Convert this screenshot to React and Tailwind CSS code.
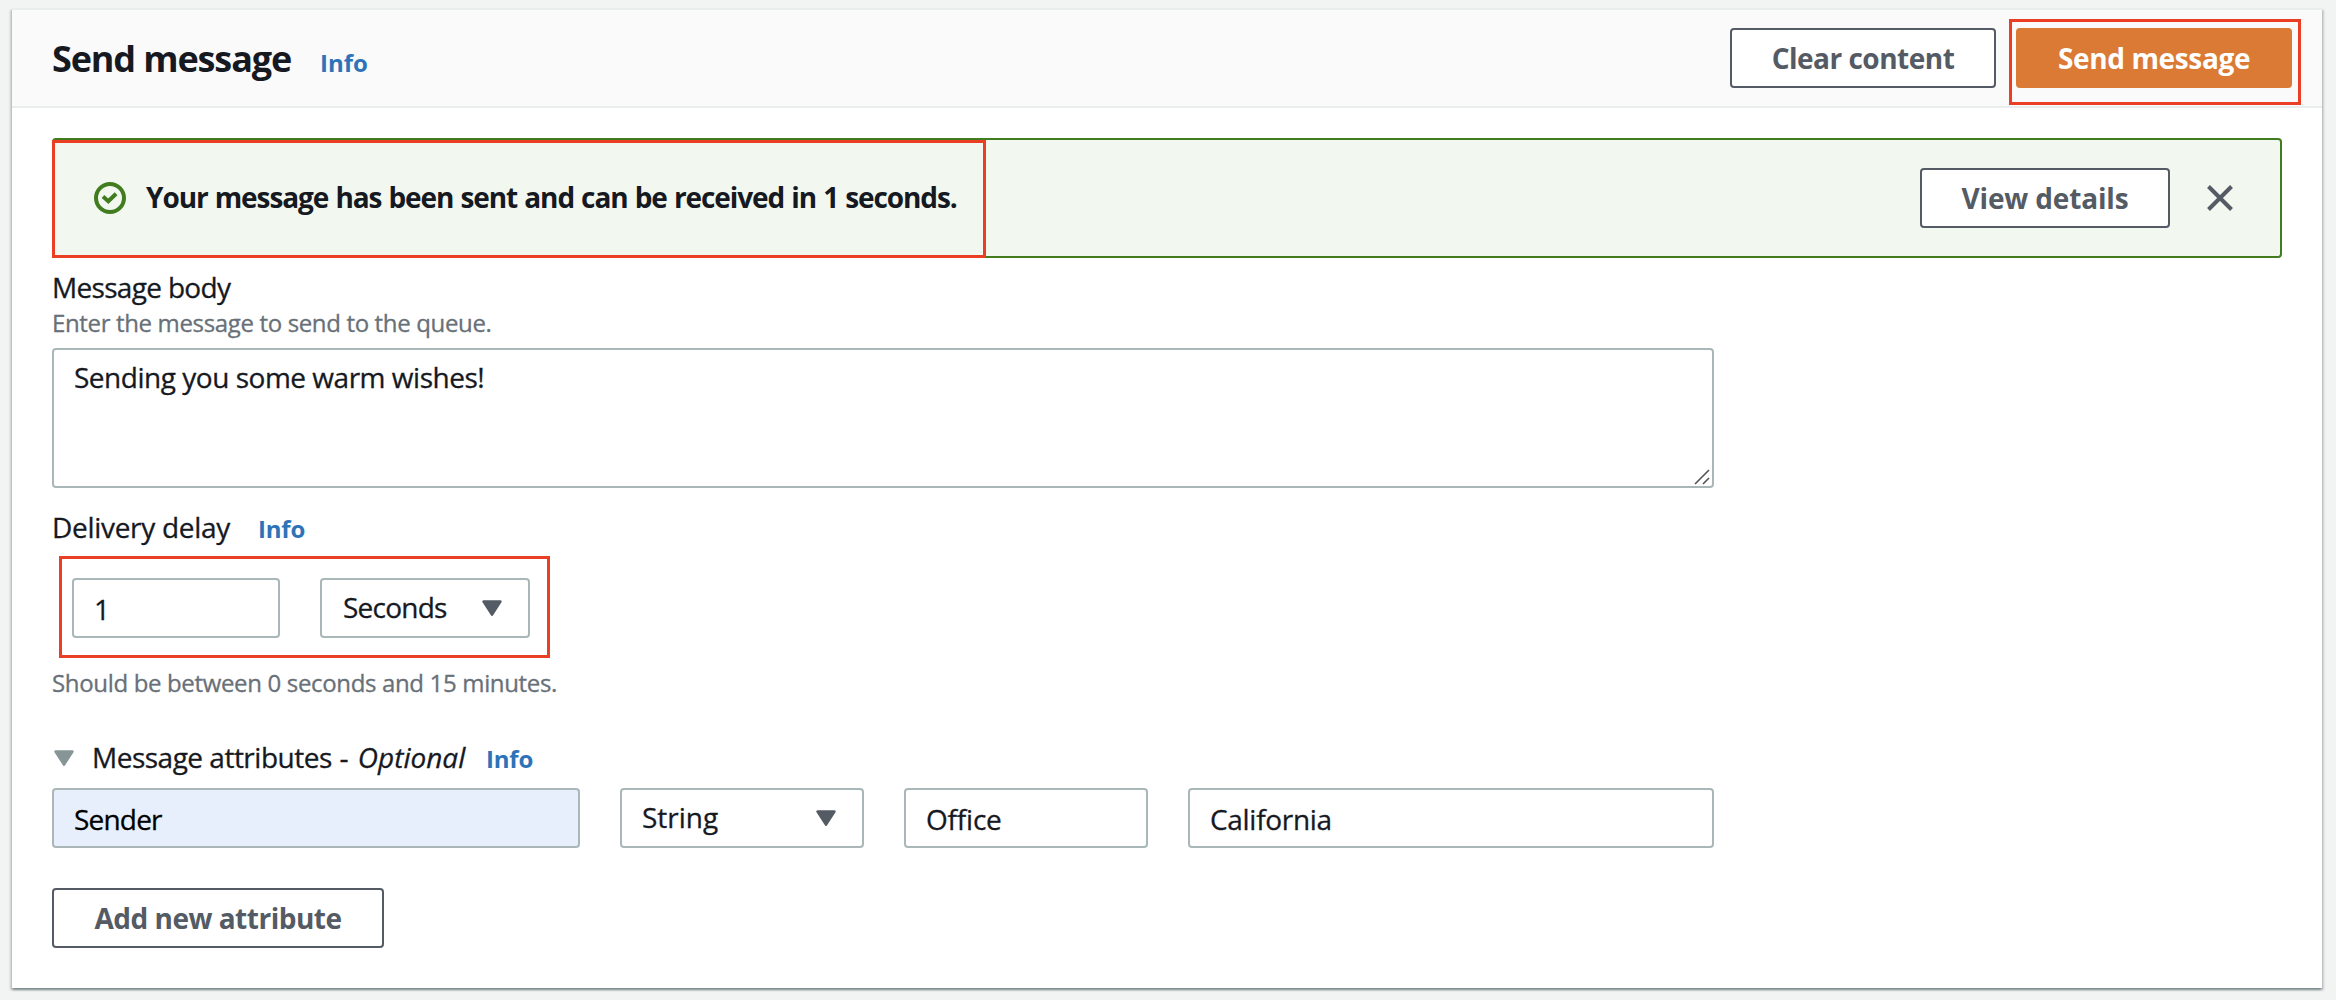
function InfoLink({ className = "" }) {
  return (
    <a href="#" className={`text-2xl leading-10 font-bold text-[#2e73b8] ${className}`}>
      Info
    </a>
  );
}

function Button({ children, className = "" }) {
  return (
    <button
      type="button"
      className={`flex h-[60px] items-center justify-center rounded-[4px] border-2 border-[#545b64] bg-white font-bold whitespace-nowrap text-[#545b64] ${className}`}
    >
      {children}
    </button>
  );
}

function Caret({ className = "" }) {
  return (
    <svg viewBox="0 0 20 16" className={`h-4 w-5 shrink-0 ${className}`} aria-hidden="true">
      <path d="M1.6 1.5h16.8L10 14.6z" fill="currentColor" stroke="currentColor" strokeWidth="2.6" strokeLinejoin="round" />
    </svg>
  );
}

function Field({ children, className = "" }) {
  return (
    <div className={`flex h-[60px] items-center rounded-[4px] border-2 border-[#aab7b8] pt-0.5 pl-5 ${className}`}>
      {children}
    </div>
  );
}

function Select({ children, className = "" }) {
  return (
    <div className={`flex h-[60px] items-center justify-between rounded-[4px] border-2 border-[#aab7b8] bg-white ${className}`}>
      <span className="pb-0.5">{children}</span>
      <Caret className="text-[#545b64]" />
    </div>
  );
}

export default function App() {
  return (
    <div className="h-[1000px] w-[2336px] bg-[#f2f3f3] pt-2 pr-3.5 pl-3 font-['Open_Sans','Noto_Sans',sans-serif] text-[28px] leading-10 text-[#16191f]">
      <main className="h-[980px] border-t-2 border-[#eaeded] bg-white shadow-[0_2px_2px_0_rgba(0,28,36,0.3),2px_2px_2px_0_rgba(0,28,36,0.15),-2px_2px_2px_0_rgba(0,28,36,0.15)]">
        <header className="flex h-[98px] items-start justify-between border-b-2 border-[#eaeded] bg-[#fafafa] pr-[21px] pl-10">
          <div className="flex items-baseline pt-[29px]">
            <h1 className="w-[268px] text-4xl leading-10 font-bold tracking-[-1.13px] whitespace-nowrap">Send message</h1>
            <InfoLink />
          </div>
          <div className="flex pt-[9px]">
            <Button className="mt-[9px] mr-[13px] w-[266px] tracking-[-0.5px]">Clear content</Button>
            <div className="h-[86px] w-[292px] border-3 border-[#eb3f25] pt-1.5 pl-1">
              <button
                type="button"
                className="flex h-[60px] w-[276px] items-center justify-center rounded-[4px] bg-[#db7a34] font-bold tracking-[-0.36px] text-white"
              >
                Send message
              </button>
            </div>
          </div>
        </header>

        <div className="px-10 pt-[30px]">
          <section className="relative flex h-[120px] items-center rounded-[4px] border-2 border-[#417d1f] bg-[#f2f8f0] pr-[47px] pl-10">
            <svg viewBox="0 0 32 32" className="h-8 w-8 text-[#417d1f]" fill="none" stroke="currentColor" strokeWidth="4" aria-hidden="true">
              <circle cx="16" cy="16" r="14" />
              <path d="M9 14.6l5.3 4.6 7.8-7.4" />
            </svg>
            <p className="ml-5 pb-0.5 font-bold tracking-[-1.08px] [word-spacing:0.9px] whitespace-nowrap">
              Your message has been sent and can be received in 1 seconds.
            </p>
            <Button className="ml-auto w-[250px] tracking-[-0.16px]">View details</Button>
            <svg viewBox="0 0 26 26" className="ml-[37px] h-[26px] w-[26px] text-[#545b64]" fill="none" stroke="currentColor" strokeWidth="4" aria-hidden="true">
              <path d="M1.5 1.5l23 23M24.5 1.5l-23 23" />
            </svg>
            <div className="pointer-events-none absolute top-0 -left-0.5 h-[118px] w-[934px] border-3 border-[#eb3f25]" />
          </section>

          <h2 className="mt-[9px] tracking-[-0.68px] [-webkit-text-stroke:0.3px]">Message body</h2>
          <p className="text-2xl leading-8 tracking-[-0.35px] text-[#687078] [-webkit-text-stroke:0.3px]">
            Enter the message to send to the queue.
          </p>
          <div className="mt-[9px] flex h-[140px] w-[1662px] items-start justify-between rounded-[4px] border-2 border-[#aab7b8] pl-5">
            <span className="pt-[7px] tracking-[-0.48px] [-webkit-text-stroke:0.3px]">Sending you some warm wishes!</span>
            <svg viewBox="0 0 16 16" className="mr-0.5 mb-px h-4 w-4 self-end text-[#555]" fill="none" stroke="currentColor" strokeWidth="1.6" aria-hidden="true">
              <path d="M1 15L15 1M9 15l6-6" />
            </svg>
          </div>

          <div className="mt-[19px] flex h-10 items-baseline">
            <h2 className="w-[206px] tracking-[-0.3px] [-webkit-text-stroke:0.3px]">Delivery delay</h2>
            <InfoLink className="tracking-[-0.2px]" />
          </div>
          <div className="mt-[9px] ml-[7px] flex h-[102px] w-[491px] gap-10 border-3 border-[#eb3f25] pt-[19px] pl-2.5 [-webkit-text-stroke:0.3px]">
            <Field className="w-[208px]">1</Field>
            <Select className="w-[210px] pr-[26px] pl-[21px] tracking-[-0.77px]">Seconds</Select>
          </div>
          <p className="mt-[9px] text-2xl leading-8 tracking-[-0.34px] text-[#687078] [-webkit-text-stroke:0.3px]">
            Should be between 0 seconds and 15 minutes.
          </p>

          <div className="mt-[38px] flex h-10 items-start">
            <Caret className="mt-[13px] mr-[18px] ml-0.5 text-[#879596]" />
            <div className="flex items-baseline">
              <h2 className="w-[394px] tracking-[-0.5px] whitespace-nowrap [-webkit-text-stroke:0.3px]">
                Message attributes <span className="ml-px">-</span> <em className="ml-[3px] tracking-normal">Optional</em>
              </h2>
              <InfoLink className="tracking-[-0.2px]" />
            </div>
          </div>
          <div className="mt-[11px] flex gap-10 [-webkit-text-stroke:0.3px]">
            <Field className="w-[528px] bg-[#e8effc] tracking-[-0.8px] text-black">Sender</Field>
            <Select className="w-[244px] pr-[26px] pl-5">String</Select>
            <Field className="w-[244px] tracking-[-0.2px]">Office</Field>
            <Field className="w-[526px] tracking-[-0.3px]">California</Field>
          </div>
          <Button className="mt-10 w-[332px] tracking-[-0.5px]">Add new attribute</Button>
        </div>
      </main>
    </div>
  );
}
